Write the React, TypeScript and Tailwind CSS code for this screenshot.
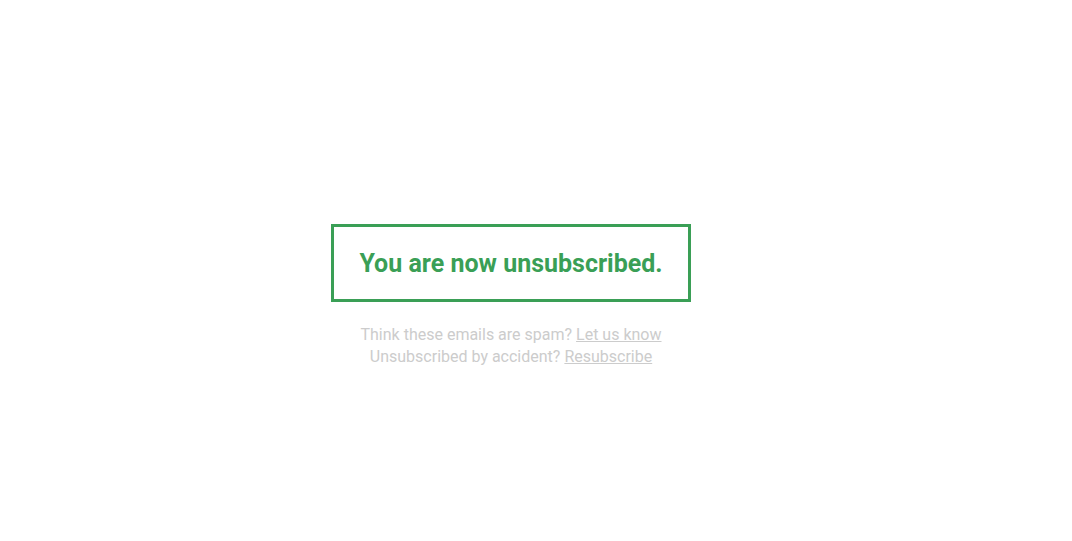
export default function App() {
  return (
    <div className="min-h-screen bg-white font-['Roboto',sans-serif]">
      <div className="w-[1022px] pt-[224px] flex flex-col items-center">
        <div className="border-[3px] border-[#3a9f56] px-[25px] pt-[22px] pb-[21px]">
          <h1 className="text-[25px] leading-[29px] font-bold text-[#3a9f56]">
            You are now unsubscribed.
          </h1>
        </div>
        <div className="mt-[22px] text-center text-[16px] leading-[22px] text-[#cccccc]">
          <p>
            Think these emails are spam?{' '}
            <a href="#" className="underline">Let us know</a>
          </p>
          <p>
            Unsubscribed by accident?{' '}
            <a href="#" className="underline">Resubscribe</a>
          </p>
        </div>
      </div>
    </div>
  );
}
